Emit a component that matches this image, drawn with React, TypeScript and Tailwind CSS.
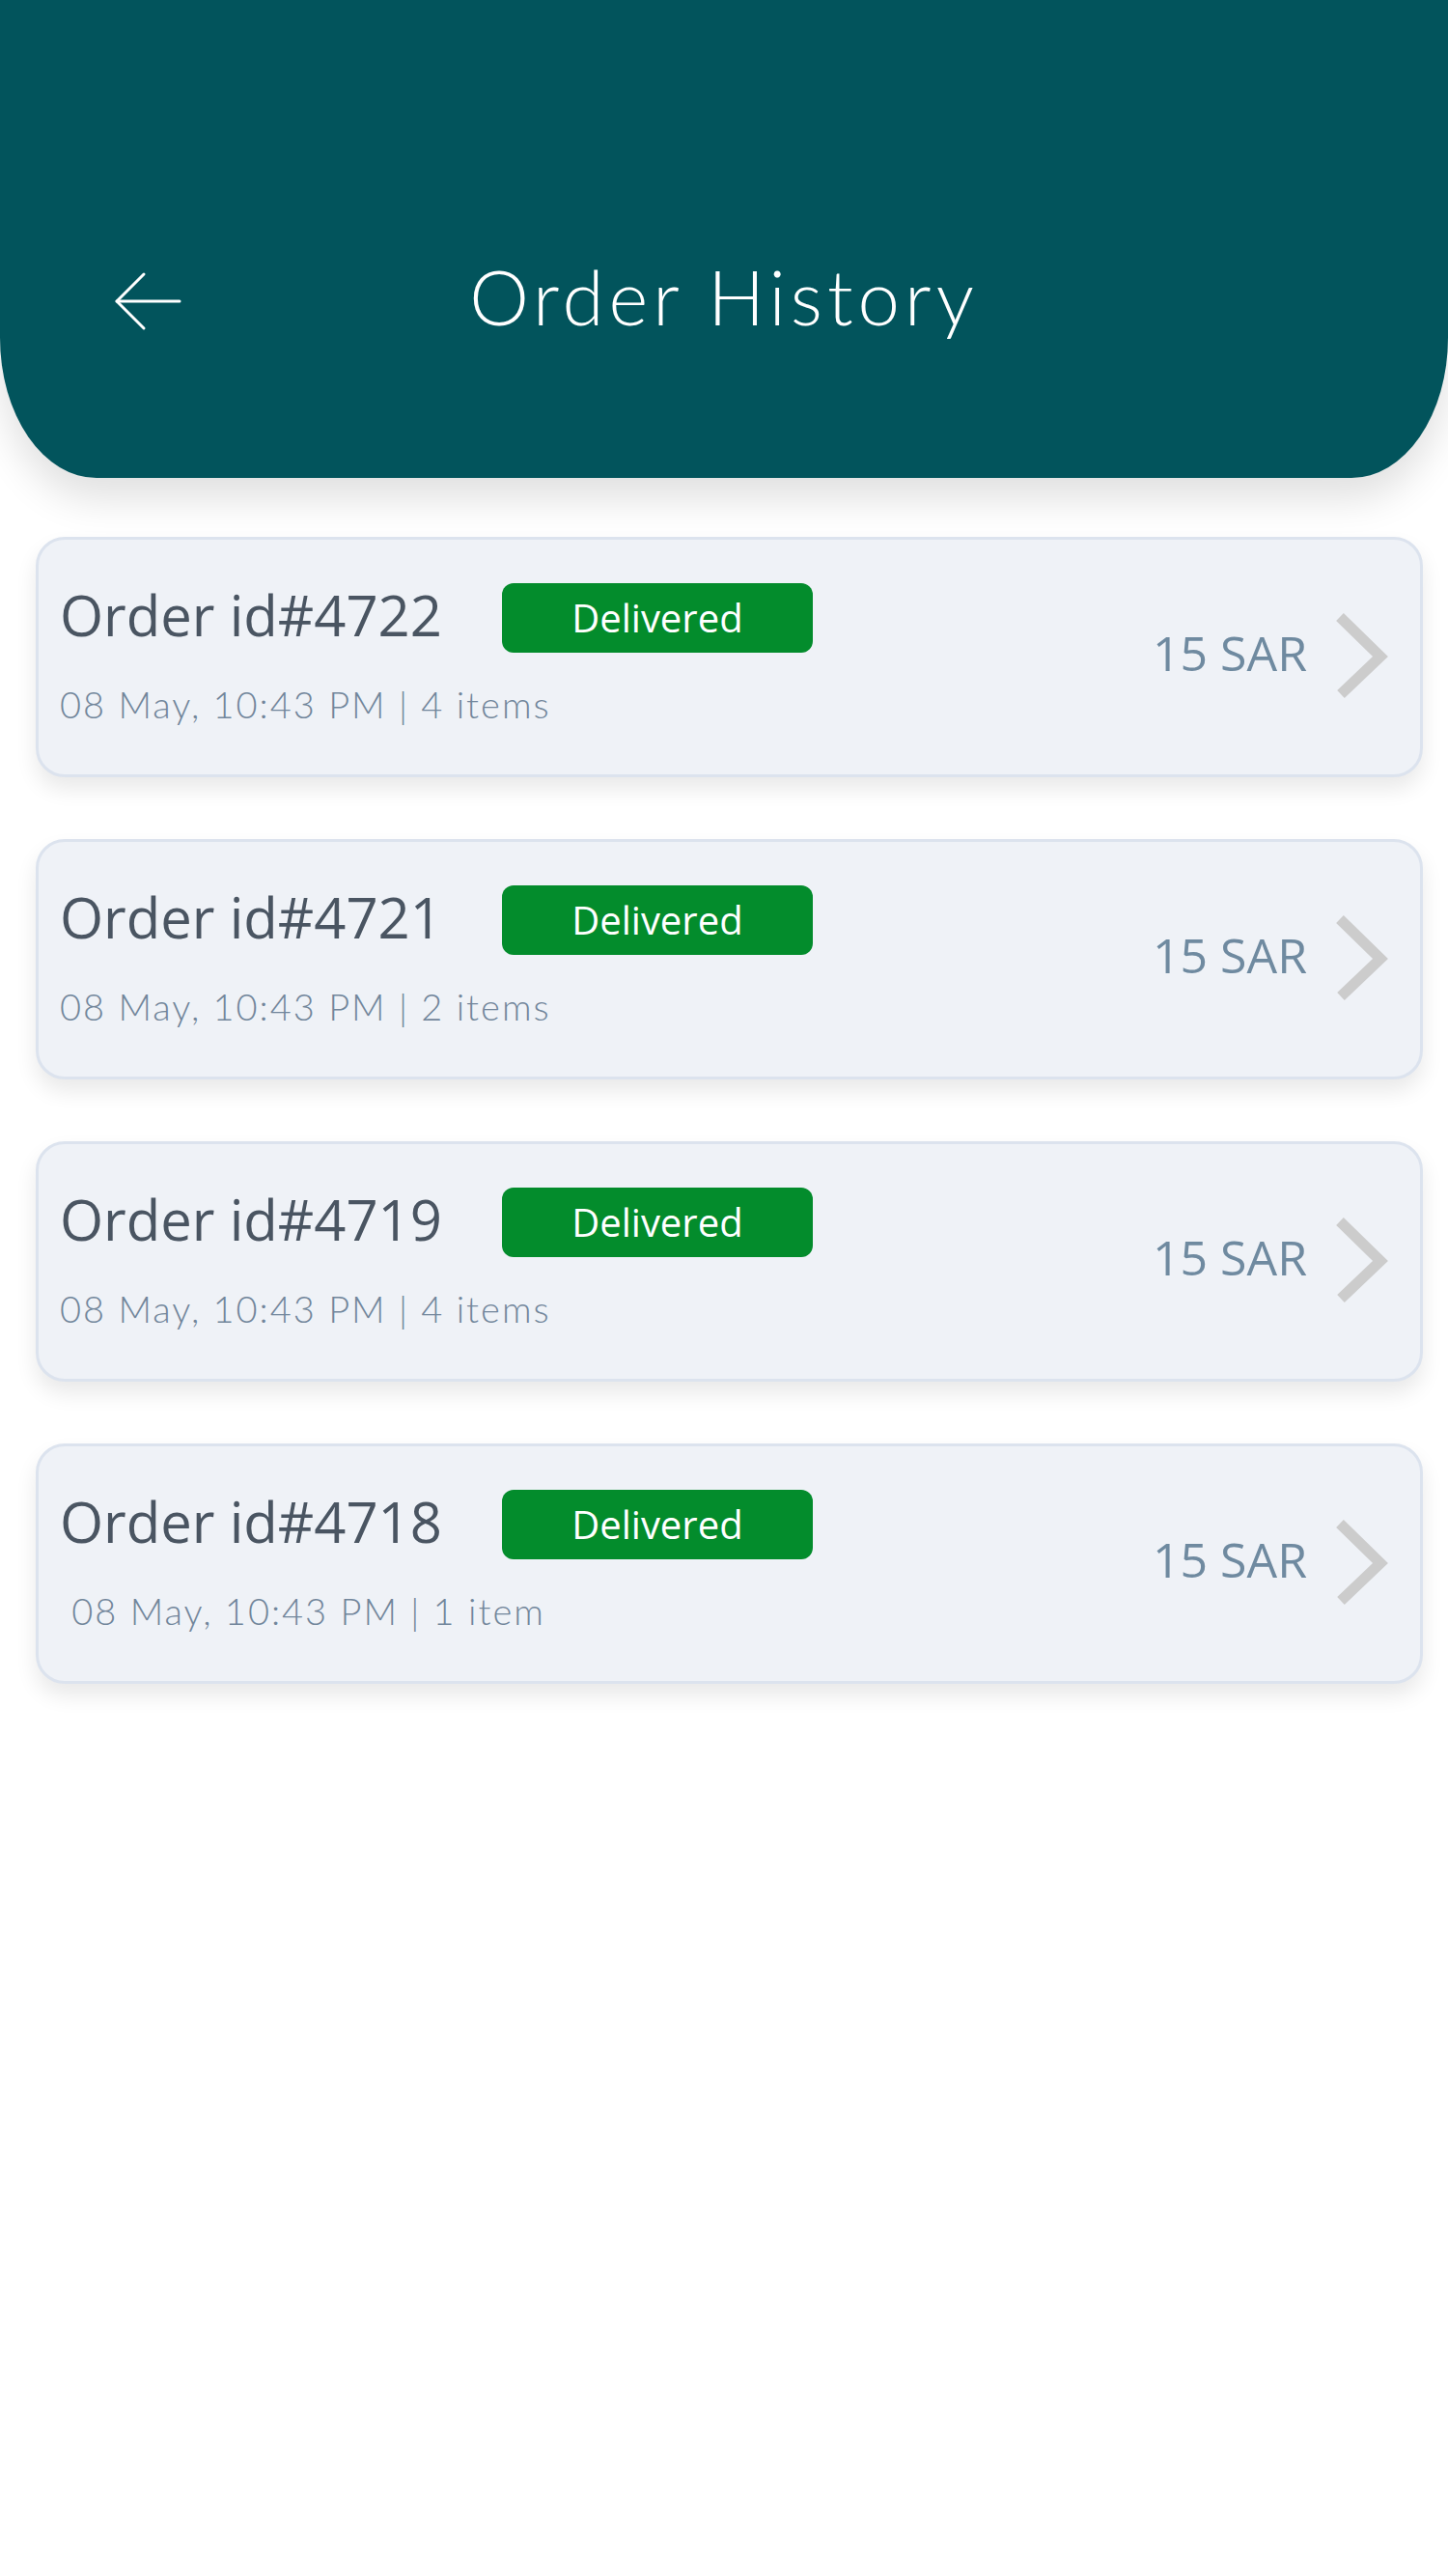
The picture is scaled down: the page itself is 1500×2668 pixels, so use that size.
const orders = [
  { id: "4722", meta: "08 May, 10:43 PM | 4 items" },
  { id: "4721", meta: "08 May, 10:43 PM | 2 items" },
  { id: "4719", meta: "08 May, 10:43 PM | 4 items" },
  { id: "4718", meta: " 08 May, 10:43 PM | 1 item" },
];

function BackArrow() {
  return (
    <svg width="70" height="62" viewBox="0 0 70 62" fill="none" stroke="white" strokeWidth="3" strokeLinecap="round" strokeLinejoin="round">
      <path d="M68 31H3" />
      <path d="M31 3L3 31L31 59" />
    </svg>
  );
}

function Chevron() {
  return (
    <svg width="56" height="88" viewBox="0 0 56 88" fill="none" stroke="#cccccc" strokeWidth="11" strokeLinejoin="miter">
      <polyline points="4,4 46,45 5,84" />
    </svg>
  );
}

function OrderCard({ id, meta }: { id: string; meta: string }) {
  return (
    <div className="flex h-[249px] items-center justify-between rounded-[30px] border-[3px] border-[#dce3ee] bg-[#eff2f7] pl-[22px] pr-[31px] shadow-[0_12px_22px_rgba(0,0,0,0.09)]">
      <div className="flex flex-col pb-[10px]">
        <div className="flex items-center gap-[62px]">
          <span className="-mt-[6px] font-['Open_Sans',sans-serif] text-[58px] leading-none text-[#4a5562]">
            Order id#{id}
          </span>
          <span className="flex h-[72px] w-[322px] items-center justify-center rounded-[12px] bg-[#038c2c] font-['Open_Sans',sans-serif] text-[40px] leading-none text-white">
            Delivered
          </span>
        </div>
        <span className="mt-[34px] whitespace-pre font-['Lato',sans-serif] text-[38px] font-light leading-none tracking-[2px] text-[#72869b]">
          {meta}
        </span>
      </div>
      <div className="flex items-center gap-[30px] pb-[4px]">
        <span className="-mt-[6px] font-['Open_Sans',sans-serif] text-[50px] leading-none text-[#6f8aa0]">15 SAR</span>
        <Chevron />
      </div>
    </div>
  );
}

export default function App() {
  return (
    <div className="min-h-[2668px] bg-white font-['Open_Sans',sans-serif]">
      <header className="grid h-[495px] grid-cols-[1fr_auto_1fr] items-center rounded-b-[100px_145px] bg-[#02545c] pt-[119px] shadow-[0_22px_40px_rgba(0,0,0,0.12)]">
        <div className="pl-[118px] pt-[10px]">
          <BackArrow />
        </div>
        <h1 className="font-['Lato',sans-serif] text-[78px] font-light tracking-[5px] text-white">Order History</h1>
        <div />
      </header>

      <main className="flex flex-col gap-[64px] pl-[37px] pr-[26px] pt-[61px]">
        {orders.map((o) => (
          <OrderCard key={o.id} id={o.id} meta={o.meta} />
        ))}
      </main>
    </div>
  );
}
